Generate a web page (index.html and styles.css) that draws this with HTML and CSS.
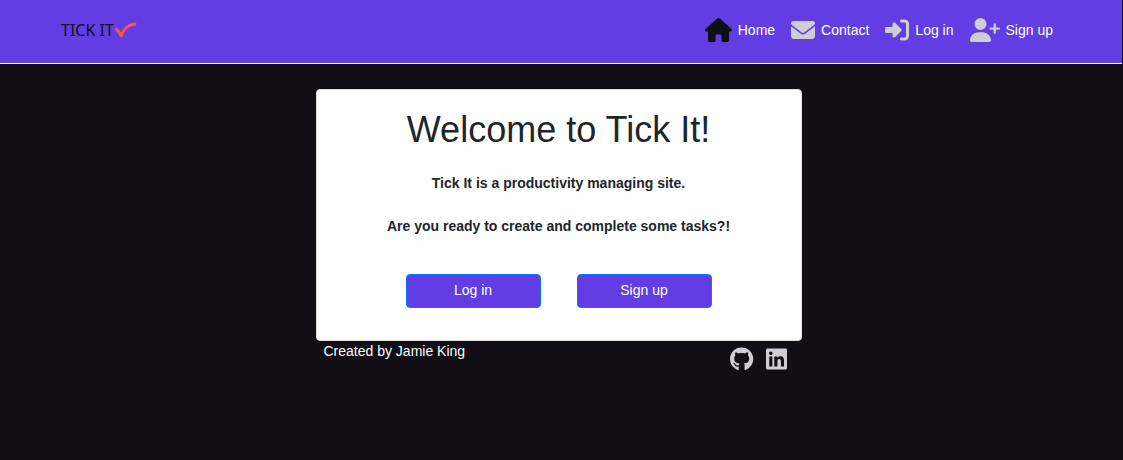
FILE: index.html
```html
<!DOCTYPE html>
<html lang="en">
<head>
<meta charset="utf-8">
<meta name="viewport" content="width=device-width, initial-scale=1">
<title>Tick It</title>
<link rel="stylesheet" href="styles.css">
</head>
<body>
<header class="navbar">
  <a class="brand" href="#" aria-label="Tick It">
    <span class="brand-text">TICK IT</span>
    <svg class="brand-tick" viewBox="0 0 24 18" aria-hidden="true"><path d="M2.500 8.500Q5 10 7 15Q11 4 21 3" fill="none" stroke="#ff5252" stroke-width="3" stroke-linecap="round" stroke-linejoin="round"/></svg>
  </a>
  <nav class="nav">
    <a class="nav-link active" href="#">
      <svg class="icon" viewBox="0 0 576 512" aria-hidden="true"><path d="M575.8 255.5c0 18-15 32.1-32 32.1h-32l.7 160.2c0 2.7-.2 5.4-.5 8.1V472c0 22.1-17.9 40-40 40H456c-1.1 0-2.2 0-3.3-.1c-1.4 .1-2.8 .1-4.2 .1H416 392c-22.1 0-40-17.9-40-40V448 384c0-17.7-14.3-32-32-32H256c-17.7 0-32 14.3-32 32v64 24c0 22.1-17.900 40-40 40H160 128.100c-1.500 0-3-.1-4.500-.2c-1.200 .1-2.400 .2-3.600 .2H104c-22.100 0-40-17.900-40-40V360c0-.9 0-1.900 .1-2.800V287.600H32c-18 0-32-14-32-32.100c0-9 3-17 10-24L266.400 8c7-7 15-8 22-8s15 2 21 7L564.800 231.500c8 7 12 15 11 24z"/></svg>
      <span>Home</span>
    </a>
    <a class="nav-link" href="#">
      <svg class="icon" viewBox="0 0 512 512" aria-hidden="true"><path d="M48 64C21.500 64 0 85.500 0 112c0 15.100 7.100 29.300 19.200 38.400L236.800 313.600c11.400 8.500 27 8.500 38.400 0L492.800 150.400c12.100-9.100 19.200-23.300 19.200-38.400c0-26.500-21.500-48-48-48H48zM0 176V384c0 35.300 28.700 64 64 64H448c35.300 0 64-28.700 64-64V176L294.400 339.200c-22.800 17.100-54 17.100-76.800 0L0 176z"/></svg>
      <span>Contact</span>
    </a>
    <a class="nav-link" href="#">
      <svg class="icon" viewBox="0 0 512 512" aria-hidden="true"><path d="M217.900 105.900L340.700 228.700c7.200 7.200 11.300 17.100 11.300 27.300s-4.100 20.100-11.300 27.300L217.900 406.100c-6.400 6.400-15 9.900-24 9.900c-18.700 0-33.900-15.200-33.900-33.900l0-62.100L32 320c-17.700 0-32-14.300-32-32l0-64c0-17.700 14.300-32 32-32l128 0 0-62.100c0-18.700 15.200-33.900 33.900-33.900c9 0 17.600 3.600 24 9.900zM352 416l64 0c17.700 0 32-14.300 32-32l0-256c0-17.700-14.300-32-32-32l-64 0c-17.700 0-32-14.300-32-32s14.300-32 32-32l64 0c53 0 96 43 96 96l0 256c0 53-43 96-96 96l-64 0c-17.700 0-32-14.300-32-32s14.300-32 32-32z"/></svg>
      <span>Log in</span>
    </a>
    <a class="nav-link" href="#">
      <svg class="icon" viewBox="0 0 640 512" aria-hidden="true"><path d="M96 128a128 128 0 1 1 256 0A128 128 0 1 1 96 128zM0 482.300C0 383.800 79.800 304 178.300 304h91.400C368.200 304 448 383.800 448 482.300c0 16.400-13.300 29.700-29.700 29.700H29.700C13.300 512 0 498.700 0 482.300zM504 312V248H440c-13.300 0-24-10.700-24-24s10.700-24 24-24h64V136c0-13.300 10.700-24 24-24s24 10.700 24 24v64h64c13.300 0 24 10.700 24 24s-10.700 24-24 24H552v64c0 13.300-10.700 24-24 24s-24-10.700-24-24z"/></svg>
      <span>Sign up</span>
    </a>
  </nav>
</header>
<div class="page">
  <main class="card">
    <h1 class="title">Welcome to Tick It!</h1>
    <p class="lead">Tick It is a productivity managing site.</p>
    <p class="lead">Are you ready to create and complete some tasks?!</p>
    <div class="actions">
      <button class="btn" type="button">Log in</button>
      <button class="btn" type="button">Sign up</button>
    </div>
  </main>
  <footer class="footer">
    <p class="credit">Created by Jamie King</p>
    <div class="social">
      <a href="#" aria-label="GitHub"><svg class="icon" viewBox="0 0 496 512" aria-hidden="true"><path d="M165.900 397.400c0 2-2.300 3.600-5.200 3.600-3.300.3-5.600-1.300-5.600-3.600 0-2 2.300-3.600 5.200-3.600 3-.3 5.600 1.300 5.600 3.600zm-31.100-4.500c-.7 2 1.300 4.300 4.300 4.900 2.600 1 5.600 0 6.200-2s-1.300-4.300-4.300-5.200c-2.600-.7-5.500.3-6.200 2.300zm44.200-1.700c-2.900.7-4.900 2.600-4.600 4.900.3 2 2.900 3.300 5.900 2.600 2.900-.7 4.900-2.600 4.600-4.600-.3-1.900-3-3.200-5.900-2.900zM244.800 8C106.100 8 0 113.300 0 252c0 110.900 69.800 205.800 169.500 239.200 12.800 2.300 17.300-5.600 17.300-12.100 0-6.200-.3-40.400-.3-61.400 0 0-70 15-84.700-29.800 0 0-11.400-29.100-27.800-36.600 0 0-22.900-15.700 1.600-15.400 0 0 24.900 2 38.600 25.800 21.900 38.600 58.600 27.500 72.900 20.900 2.300-16 8.800-27.100 16-33.700-55.900-6.200-112.300-14.300-112.300-110.500 0-27.500 7.600-41.300 23.600-58.900-2.600-6.500-11.100-33.300 2.600-67.900 20.900-6.500 69 27 69 27 20-5.600 41.500-8.500 62.800-8.500s42.800 2.900 62.800 8.500c0 0 48.100-33.600 69-27 13.700 34.700 5.200 61.400 2.600 67.900 16 17.700 25.800 31.500 25.800 58.900 0 96.500-58.900 104.200-114.800 110.500 9.200 7.900 17 22.900 17 46.400 0 33.700-.3 75.400-.3 83.600 0 6.500 4.600 14.400 17.300 12.100C428.200 457.800 496 362.900 496 252 496 113.300 383.500 8 244.800 8z"/></svg></a>
      <a href="#" aria-label="LinkedIn"><svg class="icon" viewBox="0 0 448 512" aria-hidden="true"><path d="M416 32H31.900C14.300 32 0 46.500 0 64.300v383.400C0 465.500 14.300 480 31.900 480H416c17.600 0 32-14.500 32-32.300V64.300c0-17.800-14.400-32.300-32-32.300zM135.400 416H69V202.200h66.500V416zm-33.200-243c-21.300 0-38.500-17.300-38.500-38.500S80.900 96 102.200 96c21.200 0 38.500 17.300 38.500 38.500 0 21.300-17.200 38.500-38.500 38.500zm282.100 243h-66.400V312c0-24.800-.5-56.700-34.500-56.700-34.600 0-39.900 27-39.900 54.900V416h-66.400V202.200h63.700v29.200h.9c8.900-16.800 30.600-34.500 62.900-34.500 67.200 0 79.700 44.300 79.700 101.900V416z"/></svg></a>
    </div>
  </footer>
</div>
</body>
</html>
```
FILE: styles.css
```css
* {
  box-sizing: border-box;
}

body {
  margin: 0;
  min-height: 100vh;
  background: #110e15;
  color: #fff;
  font-family: "Liberation Sans", Arial, sans-serif;
  font-size: 14px;
  line-height: 21px;
}

a {
  color: inherit;
  text-decoration: none;
}

.navbar {
  display: flex;
  align-items: center;
  justify-content: space-between;
  min-height: 64px;
  margin-right: 1px;
  padding: 0 69px 3px 61px;
  background: #613de3;
  border-bottom: 1px solid #fff;
}

.brand {
  display: flex;
  align-items: center;
  color: #110e15;
}

.brand-text {
  font-family: "Noto Sans", sans-serif;
  font-size: 16px;
}

.brand-tick {
  width: 24px;
  height: 18px;
}

.nav {
  display: flex;
  gap: 16px;
}

.nav-link {
  display: flex;
  align-items: center;
  gap: 6px;
}

.icon {
  display: block;
  height: 24px;
  fill: #cfced3;
}

.active .icon {
  fill: #110e15;
}

.page {
  display: grid;
  grid-template-columns: minmax(0, 486px);
  justify-content: center;
  padding: 25px 6px 0 0;
}

.card {
  padding: 18px 20px 32px;
  background: #fff;
  color: #212529;
  border: 1px solid #dfdfdf;
  border-radius: 4px;
  text-align: center;
}

.title {
  margin: 0 0 21px;
  font-size: 36px;
  font-weight: 400;
  line-height: 44px;
}

.lead {
  margin: 0 0 22px;
  font-weight: 700;
}

.actions {
  display: flex;
  justify-content: center;
  gap: 36px;
  padding-top: 15px;
}

.btn {
  width: 135px;
  height: 34px;
  padding: 0 0 2px;
  background: #613de3;
  border: 1px solid #007bff;
  border-radius: 4px;
  color: #fff;
  font: inherit;
}

.footer {
  display: flex;
  justify-content: space-between;
  padding: 0 15px 0 8px;
}

.credit {
  margin: 0;
}

.social {
  display: flex;
  gap: 12px;
  padding-top: 6px;
}
```
